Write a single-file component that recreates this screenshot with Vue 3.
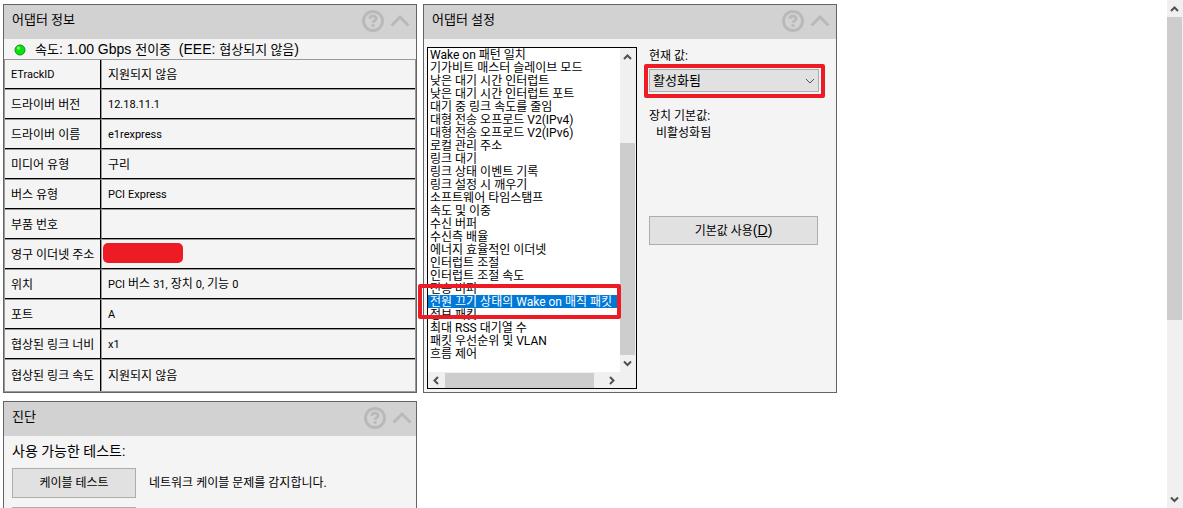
<script setup>
import { ref } from 'vue'

const info = [
  ['ETrackID', '지원되지 않음'],
  ['드라이버 버전', '12.18.11.1'],
  ['드라이버 이름', 'e1rexpress'],
  ['미디어 유형', '구리'],
  ['버스 유형', 'PCI Express'],
  ['부품 번호', ''],
  ['영구 이더넷 주소', null],
  ['위치', 'PCI 버스 31, 장치 0, 기능 0'],
  ['포트', 'A'],
  ['협상된 링크 너비', 'x1'],
  ['협상된 링크 속도', '지원되지 않음']
]

const settings = [
  'Wake on 패턴 일치',
  '기가비트 매스터 슬레이브 모드',
  '낮은 대기 시간 인터럽트',
  '낮은 대기 시간 인터럽트 포트',
  '대기 중 링크 속도를 줄임',
  '대형 전송 오프로드 V2(IPv4)',
  '대형 전송 오프로드 V2(IPv6)',
  '로컬 관리 주소',
  '링크 대기',
  '링크 상태 이벤트 기록',
  '링크 설정 시 깨우기',
  '소프트웨어 타임스탬프',
  '속도 및 이중',
  '수신 버퍼',
  '수신측 배율',
  '에너지 효율적인 이더넷',
  '인터럽트 조절',
  '인터럽트 조절 속도',
  '전송 버퍼',
  '전원 끄기 상태의 Wake on 매직 패킷',
  '정보 패킷',
  '최대 RSS 대기열 수',
  '패킷 우선순위 및 VLAN',
  '흐름 제어'
]

const selected = ref(settings[19])
const value = ref('활성화됨')

// Splits a label into runs so that Latin text can have its own size.
const runs = (text) => text.split(/([\x21-\x7e]+)/).filter(Boolean)
const isLatin = (run) => /^[\x21-\x7e]+$/.test(run)
</script>

<template>
  <div class="window">
    <main class="content">
      <section class="panel">
        <header class="head">
          <h2>어댑터 정보</h2>
          <button class="icon" aria-label="도움말">
            <svg width="22" height="22" viewBox="0 0 22 22"><circle cx="11" cy="11" r="9.5" /><path d="M7.9 8.800c0-3.700 6.200-3.700 6.200-.3 0 2.300-3 2-3 4.300" /><path d="M11 14.200v2.600" /></svg>
          </button>
          <button class="icon" aria-label="접기">
            <svg width="20" height="22" viewBox="0 0 20 22"><path d="M1.5 15.5 10 7l8.500 8.500" /></svg>
          </button>
        </header>
        <p class="status">
          <svg class="led" width="12" height="12" viewBox="0 0 12 12"><circle cx="6" cy="6" r="5" fill="#0be00b" stroke="#0b980b" /><circle cx="4.500" cy="4" r="1.500" fill="#8dff8d" /></svg>
          <span>속도<b>: 1.00 Gbps </b>전이중<b>&nbsp; (EEE: </b>협상되지 않음<b>)</b></span>
        </p>
        <table class="info">
          <tbody>
            <tr v-for="[name, text] in info" :key="name">
              <th scope="row"><span v-for="(run, i) in runs(name)" :key="i" :class="{ latin: isLatin(run) }">{{ run }}</span></th>
              <td>
                <div v-if="text === null" class="redacted"></div>
                <template v-else><span v-for="(run, i) in runs(text)" :key="i" :class="{ latin: isLatin(run) }">{{ run }}</span></template>
              </td>
            </tr>
          </tbody>
        </table>
      </section>

      <section class="panel">
        <header class="head">
          <h2>어댑터 설정</h2>
          <button class="icon" aria-label="도움말">
            <svg width="22" height="22" viewBox="0 0 22 22"><circle cx="11" cy="11" r="9.5" /><path d="M7.9 8.800c0-3.700 6.200-3.700 6.200-.3 0 2.300-3 2-3 4.300" /><path d="M11 14.200v2.600" /></svg>
          </button>
          <button class="icon" aria-label="접기">
            <svg width="20" height="22" viewBox="0 0 20 22"><path d="M1.5 15.5 10 7l8.500 8.500" /></svg>
          </button>
        </header>
        <div class="settings">
          <div class="listbox">
            <select v-model="selected" class="list" size="24" aria-label="어댑터 설정">
              <option v-for="s in settings" :key="s" :value="s">{{ s }}</option>
            </select>
            <div class="vbar">
              <svg class="arrow" width="15" height="17" viewBox="0 0 15 17"><path d="M4 11 7.500 7.500 11 11" /></svg>
              <div class="vtrack"><div class="vthumb"></div></div>
              <svg class="arrow" width="15" height="17" viewBox="0 0 15 17"><path d="M4 6.500 7.500 10 11 6.500" /></svg>
            </div>
            <div class="hbar">
              <svg class="arrow" width="17" height="15" viewBox="0 0 17 15"><path d="M10 4 6.500 7.500 10 11" /></svg>
              <div class="htrack"><div class="hthumb"></div></div>
              <svg class="arrow" width="17" height="15" viewBox="0 0 17 15"><path d="M7 4l3.500 3.500L7 11" /></svg>
            </div>
            <div class="corner"></div>
            <div class="mark mark-list"></div>
          </div>
          <div class="side">
            <label for="current">현재 값:</label>
            <div class="combo">
              <select id="current" v-model="value">
                <option>활성화됨</option>
                <option>비활성화됨</option>
              </select>
              <svg class="chevron" width="10" height="6" viewBox="0 0 10 6"><path d="M1 1l4 4 4-4" /></svg>
              <div class="mark mark-combo"></div>
            </div>
            <p class="caption">장치 기본값:</p>
            <p class="default">비활성화됨</p>
            <button class="button reset">기본값 사용<b>(<u>D</u>)</b></button>
          </div>
        </div>
      </section>

      <section class="panel diagnostics">
        <header class="head">
          <h2>진단</h2>
          <button class="icon" aria-label="도움말">
            <svg width="22" height="22" viewBox="0 0 22 22"><circle cx="11" cy="11" r="9.5" /><path d="M7.9 8.800c0-3.700 6.200-3.700 6.200-.3 0 2.300-3 2-3 4.300" /><path d="M11 14.200v2.600" /></svg>
          </button>
          <button class="icon" aria-label="접기">
            <svg width="20" height="22" viewBox="0 0 20 22"><path d="M1.5 15.5 10 7l8.500 8.500" /></svg>
          </button>
        </header>
        <div class="tests">
          <p class="tests-title">사용 가능한 테스트:</p>
          <div class="test">
            <button class="button">케이블 테스트</button>
            <p>네트워크 케이블 문제를 감지합니다.</p>
          </div>
          <div class="test">
            <button class="button" aria-label="테스트"></button>
          </div>
        </div>
      </section>
    </main>

    <div class="pagebar">
      <svg class="arrow" width="15" height="17" viewBox="0 0 15 17"><path d="M4 11 7.500 7.500 11 11" /></svg>
      <div class="pagetrack"><div class="pagethumb"></div></div>
      <svg class="arrow" width="15" height="17" viewBox="0 0 15 17"><path d="M4 6.500 7.500 10 11 6.500" /></svg>
    </div>
  </div>
</template>

<style>
body {
  margin: 0;
  background: #fff;
}
</style>

<style scoped>
* {
  box-sizing: border-box;
}
.window {
  display: flex;
  height: 100vh;
  overflow: hidden;
  color: #000;
  font: 12px/16px Roboto, "Noto Sans CJK KR", sans-serif;
}
p,
h2 {
  margin: 0;
  font-weight: normal;
}
b {
  font-family: "Liberation Sans", sans-serif;
  font-size: 14px;
  font-weight: normal;
}
button,
select {
  font: inherit;
  color: inherit;
}
.content {
  flex: 1;
  display: grid;
  grid-template-columns: repeat(2, minmax(0, 414px));
  align-content: start;
  gap: 8px 6px;
  padding: 4px 3px;
}
.panel {
  border: 1px solid #646464;
  background: #f4f4f4;
}
.head {
  display: flex;
  align-items: flex-start;
  height: 34px;
  padding: 5px 6px 0 8px;
  background: #d2d2d2;
}
.head h2 {
  flex: 1;
  font-size: 13px;
  line-height: 20px;
}
.icon {
  display: block;
  height: 22px;
  margin-left: 6px;
  padding: 0;
  border: 0;
  background: none;
}
.icon svg {
  display: block;
  fill: none;
  stroke: #b9b9b9;
  stroke-width: 3;
}
.status {
  display: flex;
  align-items: center;
  gap: 9px;
  height: 20px;
  padding: 1px 0 0 10px;
  font-size: 13px;
  line-height: 20px;
  white-space: pre;
}
.info {
  width: 100%;
  border: 1px solid #999;
  border-spacing: 0;
  table-layout: fixed;
}
.info th,
.info td {
  height: 30px;
  padding: 1px 6px 0;
  border-top: 1px solid #999;
  border-bottom: 1px solid #000;
  font-weight: normal;
  text-align: left;
  white-space: nowrap;
}
.info tr:first-child > * {
  border-top: 0;
  height: 29px;
}
.info tr:last-child > * {
  border-bottom: 0;
  height: 32px;
}
.info th {
  width: 96px;
  padding-right: 0;
  border-right: 1px solid #000;
}
.info td {
  border-left: 1px solid #999;
}
.latin {
  font-size: 11px;
}
.redacted {
  width: 80px;
  height: 20px;
  margin: 0 0 4px -5px;
  border-radius: 5px;
  background: #ed1c24;
}
.settings {
  display: flex;
  gap: 12px;
  padding: 8px 17px 3px 3px;
}
.listbox {
  position: relative;
  flex: 1;
  display: grid;
  grid-template: 1fr 16px / 1fr 16px;
  height: 342px;
  border: 1px solid #000;
  background: #fff;
}
.list {
  appearance: none;
  width: 100%;
  height: 100%;
  min-width: 0;
  padding: 0;
  border: 0;
  border-radius: 0;
  outline: 0;
  overflow: hidden;
  background: #fff;
}
.list option {
  display: flex;
  align-items: center;
  height: 13px;
  min-height: 0;
  padding: 0 2px 2px;
  line-height: 13px;
}
.list option:checked {
  background: #0078d7 linear-gradient(#0078d7, #0078d7);
  color: #fff;
}
.vbar {
  display: flex;
  flex-direction: column;
  background: #f0f0f0;
}
.vtrack,
.pagetrack {
  flex: 1;
  display: flex;
  flex-direction: column;
}
.vtrack {
  justify-content: flex-end;
}
.vthumb {
  width: 15px;
  height: 73%;
  background: #cdcdcd;
}
.hbar {
  display: flex;
  align-items: center;
  background: #f0f0f0;
}
.htrack {
  flex: 1;
  height: 15px;
}
.hthumb {
  width: 94%;
  height: 100%;
  background: #cdcdcd;
}
.corner {
  background: #f0f0f0;
}
.arrow {
  flex: none;
  fill: none;
  stroke: #505050;
  stroke-width: 2;
}
.mark {
  position: absolute;
  border: 4px solid #ed1c24;
  border-radius: 2px;
  pointer-events: none;
}
.mark-list {
  top: 236px;
  left: -10px;
  right: 15px;
  height: 35px;
}
.mark-combo {
  inset: -5px -6px -6px -5px;
}
.side {
  width: 170px;
  display: flex;
  flex-direction: column;
  padding-top: 1px;
}
.combo {
  position: relative;
  height: 23px;
  margin: 5px 0 16px;
}
.combo select {
  appearance: none;
  width: 100%;
  height: 100%;
  padding: 0 3px;
  border: 1px solid #adadad;
  border-radius: 0;
  background: #e1e1e1;
  font-size: 13px;
}
.chevron {
  position: absolute;
  right: 4px;
  top: 9px;
  fill: none;
  stroke: #505050;
}
.default {
  margin: 1px 0 75px 7px;
}
.button {
  width: 124px;
  height: 30px;
  padding: 0;
  border: 1px solid #adadad;
  border-radius: 0;
  background: #e1e1e1;
}
.reset {
  width: 169px;
  height: 29px;
}
.tests {
  padding: 5px 8px;
}
.tests-title {
  margin-bottom: 7px;
  font-size: 14px;
  line-height: 20px;
}
.test {
  display: flex;
  align-items: center;
  gap: 13px;
  margin-bottom: 9px;
}
.diagnostics .head {
  padding-right: 4px;
}
.pagebar {
  display: flex;
  flex-direction: column;
  width: 16px;
  background: #f0f0f0;
}
.pagethumb {
  width: 15px;
  height: 64%;
  background: #cdcdcd;
}
</style>
